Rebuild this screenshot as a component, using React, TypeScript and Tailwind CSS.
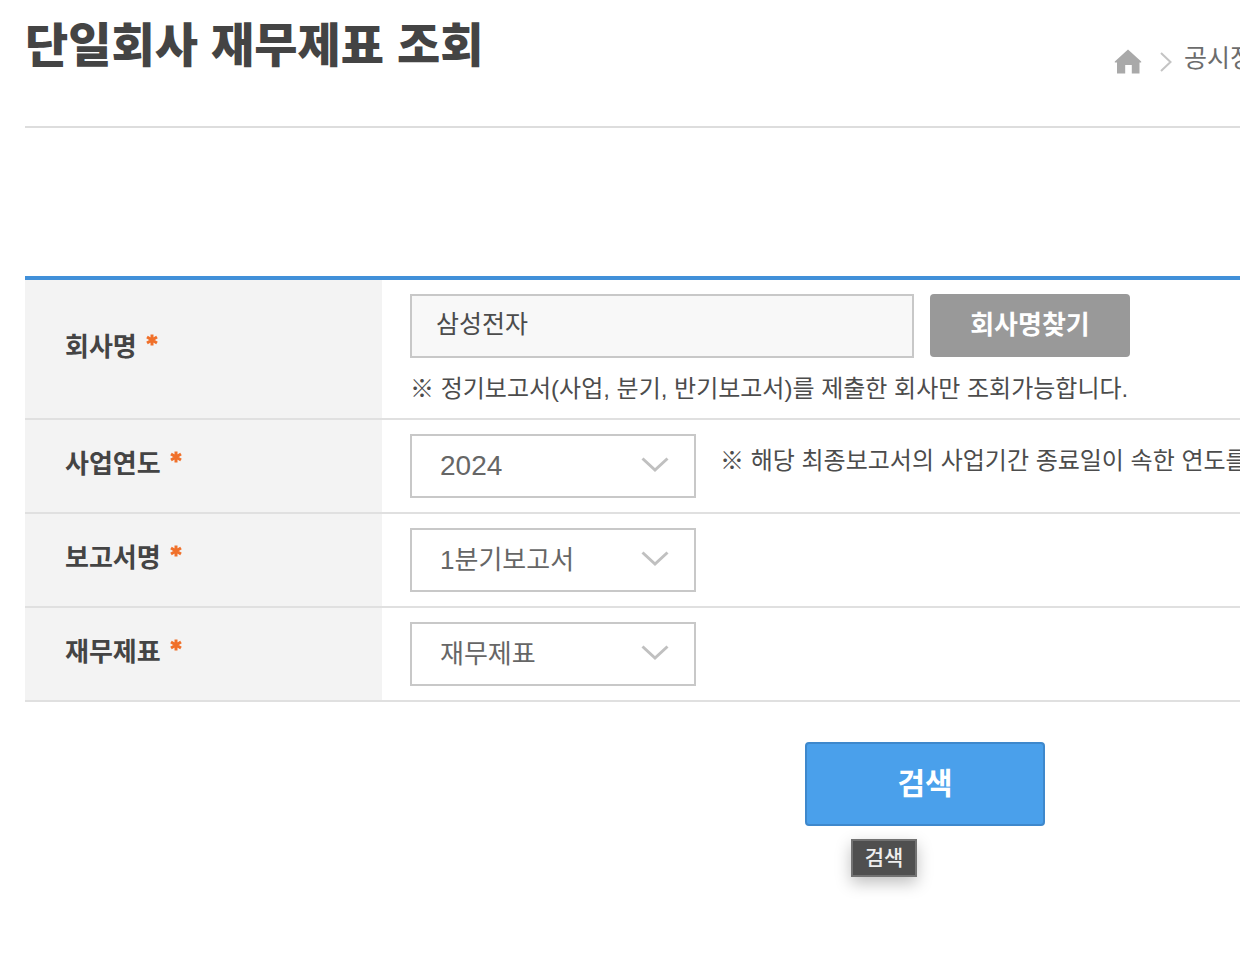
import type { ReactNode } from "react";

function HomeIcon() {
  return (
    <svg width="28" height="26" viewBox="0 0 28 26" aria-hidden="true" className="shrink-0">
      <path d="M14 0.5 L27.2 12.5 V13.5 H25.5 V24.5 H17.8 V16 H11.2 V24.5 H3 V13.5 H0.8 V12.5 Z" fill="#a9a9a9" />
    </svg>
  );
}

function SeparatorIcon() {
  return (
    <svg width="12" height="20" viewBox="0 0 12 20" aria-hidden="true" className="shrink-0">
      <path d="M1 1 L10.5 10 L1 19" fill="none" stroke="#c4c4c4" strokeWidth="2" />
    </svg>
  );
}

function RequiredMark() {
  return (
    <svg width="12" height="12" viewBox="0 0 12 12" role="img" aria-label="필수" className="mb-3.5 shrink-0">
      <path d="M6 0.5 V11.5 M1 3 L11 9 M11 3 L1 9" fill="none" stroke="#f0702a" strokeWidth="3" />
    </svg>
  );
}

type RowProps = { id: string; label: string; children: ReactNode };

function Row({ id, label, children }: RowProps) {
  return (
    <tr className="border-b-2 border-[#e0e0e0]">
      <th scope="row" className="w-[357px] bg-[#f3f3f3] pb-1 pl-10 text-left align-middle">
        <label htmlFor={id} className="flex items-center gap-[9px] text-[26px] leading-10 font-bold text-[#444]">
          {label}
          <RequiredMark />
        </label>
      </th>
      <td className="pl-7">{children}</td>
    </tr>
  );
}

type SelectProps = { id: string; options: string[]; numeric?: boolean };

function Select({ id, options, numeric }: SelectProps) {
  return (
    <div className="relative my-3.5 h-16 w-[286px] shrink-0">
      <select
        id={id}
        className={`h-full w-full appearance-none border-2 border-[#c8c8c8] bg-white pl-7 text-[#666] outline-none ${
          numeric ? "text-[28px]" : "text-[26px]"
        }`}
      >
        {options.map((option) => (
          <option key={option}>{option}</option>
        ))}
      </select>
      <svg
        width="28"
        height="16"
        viewBox="0 0 28 16"
        aria-hidden="true"
        className="pointer-events-none absolute top-[23px] right-[27px]"
      >
        <path d="M1.5 1.5 L14 13 L26.5 1.5" fill="none" stroke="#c0c0c0" strokeWidth="3" />
      </svg>
    </div>
  );
}

export default function App() {
  return (
    <main className="min-h-screen overflow-hidden bg-white pl-[25px] font-['Liberation_Sans','Noto_Sans_CJK_KR',sans-serif] whitespace-nowrap">
      <header className="flex h-32 items-start border-b-2 border-[#ddd]">
        <h1 className="pt-3.5 text-[47px] leading-16 font-black text-[#444]">단일회사 재무제표 조회</h1>
        <nav aria-label="현재 위치" className="ml-auto flex w-[126px] items-center overflow-hidden pt-[42px]">
          <a href="#home" aria-label="홈">
            <HomeIcon />
          </a>
          <span className="ml-[18px]">
            <SeparatorIcon />
          </span>
          <a href="#disclosure" className="ml-3 pb-2 text-[25px] leading-8 text-[#6c6c6c]">
            공시정
          </a>
        </nav>
      </header>

      <form onSubmit={(event) => event.preventDefault()}>
        <table className="mt-[148px] w-full border-collapse">
          <tbody className="border-t-4 border-[#4190d9]">
            <Row id="company" label="회사명">
              <div className="flex gap-4 pt-3.5">
                <input
                  id="company"
                  type="text"
                  readOnly
                  value="삼성전자"
                  className="h-16 w-[504px] border-2 border-[#c8c8c8] bg-[#f8f8f8] pb-2 pl-6 text-[25px] text-[#4c4c4c] outline-none"
                />
                <button type="button" className="h-[63px] w-[200px] rounded bg-[#999] text-[26px] font-bold text-white">
                  회사명찾기
                </button>
              </div>
              <p className="pt-[11px] pb-[9px] text-2xl leading-10 text-[#4c4c4c]">
                ※ 정기보고서(사업, 분기, 반기보고서)를 제출한 회사만 조회가능합니다.
              </p>
            </Row>
            <Row id="year" label="사업연도">
              <div className="flex items-center gap-6">
                <Select id="year" options={["2024"]} numeric />
                <p className="w-0 flex-1 overflow-hidden pb-2.5 text-2xl leading-10 text-[#4c4c4c]">
                  ※ 해당 최종보고서의 사업기간 종료일이 속한 연도를
                </p>
              </div>
            </Row>
            <Row id="report" label="보고서명">
              <Select id="report" options={["1분기보고서"]} />
            </Row>
            <Row id="statement" label="재무제표">
              <Select id="statement" options={["재무제표"]} />
            </Row>
          </tbody>
        </table>

        <div className="flex pt-10 pl-[780px]">
          <div className="relative">
            <button
              type="submit"
              aria-describedby="search-tip"
              className="h-[84px] w-60 rounded border-2 border-[#3e88cc] bg-[#4aa0eb] pb-0.5 text-[30px] font-bold text-white"
            >
              검색
            </button>
            <div
              id="search-tip"
              role="tooltip"
              className="absolute top-[97px] left-[46px] flex h-[38px] w-[66px] items-center justify-center border-2 border-[#727272] bg-[#4f4f4f] text-[21px] leading-8 font-medium text-[#eee] shadow-[0_6px_16px_rgba(0,0,0,0.25)]"
            >
              검색
            </div>
          </div>
        </div>
      </form>
    </main>
  );
}
